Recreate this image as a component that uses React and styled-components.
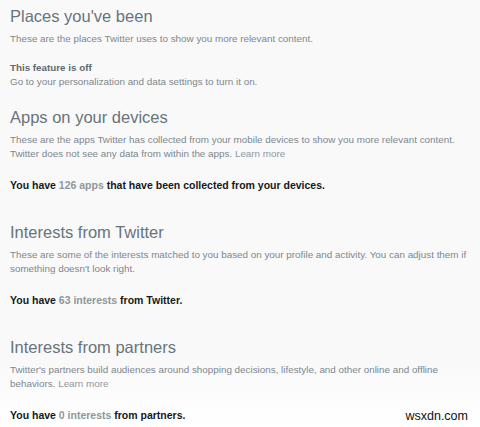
import React from "react";
import styled, { createGlobalStyle } from "styled-components";

const GlobalStyle = createGlobalStyle`
  html, body {
    margin: 0;
    padding: 0;
    background: #f9f9f9;
  }
  body {
    font-family: "Liberation Sans", Arial, sans-serif;
  }
`;

const sections = [
  {
    title: "Places you've been",
    text: "These are the places Twitter uses to show you more relevant content.",
    note: {
      title: "This feature is off",
      text: "Go to your personalization and data settings to turn it on.",
    },
  },
  {
    title: "Apps on your devices",
    text: "These are the apps Twitter has collected from your mobile devices to show you more relevant content. Twitter does not see any data from within the apps.",
    learnMore: true,
    count: { before: "You have ", value: "126 apps", after: " that have been collected from your devices." },
  },
  {
    title: "Interests from Twitter",
    text: "These are some of the interests matched to you based on your profile and activity. You can adjust them if something doesn't look right.",
    count: { before: "You have ", value: "63 interests", after: " from Twitter." },
  },
  {
    title: "Interests from partners",
    text: "Twitter's partners build audiences around shopping decisions, lifestyle, and other online and offline behaviors.",
    learnMore: true,
    count: { before: "You have ", value: "0 interests", after: " from partners." },
  },
];

const App = () => {
  return (
    <>
      <GlobalStyle />
      <Page>
        {sections.map((s) => (
          <Section key={s.title}>
            <Heading>{s.title}</Heading>
            <Description>
              {s.text}
              {s.learnMore && (
                <>
                  {" "}
                  <LearnMore href="#">Learn more</LearnMore>
                </>
              )}
            </Description>
            {s.note && (
              <Note>
                <NoteTitle>{s.note.title}</NoteTitle>
                <NoteText>{s.note.text}</NoteText>
              </Note>
            )}
            {s.count && (
              <Count>
                {s.count.before}
                <CountValue>{s.count.value}</CountValue>
                {s.count.after}
              </Count>
            )}
          </Section>
        ))}
        <Watermark>wsxdn.com</Watermark>
      </Page>
    </>
  );
};

export default App;

const Page = styled.div`
  position: relative;
  display: flex;
  flex-direction: column;
  width: 480px;
  height: 427px;
  box-sizing: border-box;
  padding: 6px 6px 0 10px;
  overflow: hidden;
  background: linear-gradient(to bottom, #f9f9f9 0%, #f9f9f9 85%, #ffffff 100%);
`;

const Section = styled.section`
  display: flex;
  flex-direction: column;
  margin-bottom: 17px;
`;

const Heading = styled.h2`
  margin: 0;
  font-size: 16.5px;
  line-height: 20px;
  font-weight: 400;
  color: #68747c;
`;

const Description = styled.p`
  margin: 6px 0 0;
  font-size: 9.85px;
  line-height: 14.5px;
  color: #7d878e;
`;

const LearnMore = styled.a`
  color: #8f989e;
  text-decoration: none;
`;

const Note = styled.div`
  margin-top: 14px;
  font-size: 9.85px;
  line-height: 14.5px;
`;

const NoteTitle = styled.div`
  font-size: 9.8px;
  font-weight: 700;
  color: #5f6970;
`;

const NoteText = styled.div`
  color: #7d878e;
`;

const Count = styled.p`
  margin: 16px 0 12.5px;
  font-size: 10.5px;
  line-height: 14.5px;
  font-weight: 700;
  color: #15191c;
`;

const CountValue = styled.span`
  color: #8d979d;
`;

const Watermark = styled.span`
  position: absolute;
  right: 12px;
  bottom: 4px;
  font-family: "Liberation Sans", Arial, sans-serif;
  font-size: 12.5px;
  color: #111;
`;
